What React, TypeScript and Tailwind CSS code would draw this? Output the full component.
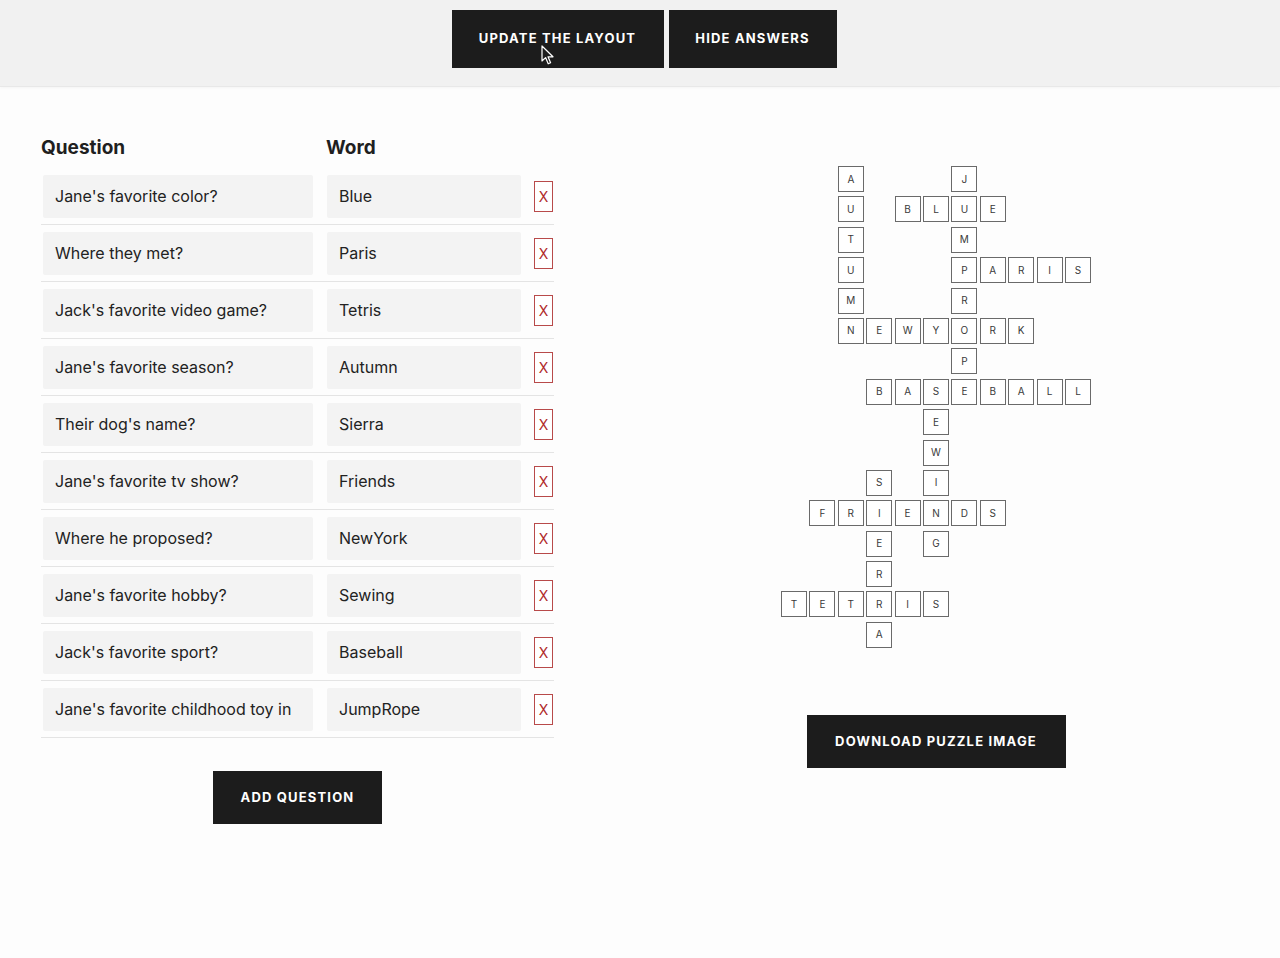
interface Entry {
  question: string
  word: string
}

interface Placement {
  word: string
  row: number
  col: number
  down: boolean
}

const entries: Entry[] = [
  { question: "Jane's favorite color?", word: 'Blue' },
  { question: 'Where they met?', word: 'Paris' },
  { question: "Jack's favorite video game?", word: 'Tetris' },
  { question: "Jane's favorite season?", word: 'Autumn' },
  { question: "Their dog's name?", word: 'Sierra' },
  { question: "Jane's favorite tv show?", word: 'Friends' },
  { question: 'Where he proposed?', word: 'NewYork' },
  { question: "Jane's favorite hobby?", word: 'Sewing' },
  { question: "Jack's favorite sport?", word: 'Baseball' },
  { question: "Jane's favorite childhood toy in", word: 'JumpRope' },
]

const placements: Placement[] = [
  { word: 'AUTUMN', row: 0, col: 2, down: true },
  { word: 'JUMPROPE', row: 0, col: 6, down: true },
  { word: 'BLUE', row: 1, col: 4, down: false },
  { word: 'PARIS', row: 3, col: 6, down: false },
  { word: 'NEWYORK', row: 5, col: 2, down: false },
  { word: 'BASEBALL', row: 7, col: 3, down: false },
  { word: 'SEWING', row: 7, col: 5, down: true },
  { word: 'SIERRA', row: 10, col: 3, down: true },
  { word: 'FRIENDS', row: 11, col: 1, down: false },
  { word: 'TETRIS', row: 14, col: 0, down: false },
]

const colStart = [
  'col-start-1', 'col-start-2', 'col-start-3', 'col-start-4', 'col-start-5', 'col-start-6',
  'col-start-7', 'col-start-8', 'col-start-9', 'col-start-10', 'col-start-11',
]

const rowStart = [
  'row-start-1', 'row-start-2', 'row-start-3', 'row-start-4', 'row-start-5', 'row-start-6',
  'row-start-7', 'row-start-8', 'row-start-9', 'row-start-10', 'row-start-11', 'row-start-12',
  'row-start-13', 'row-start-14', 'row-start-15', 'row-start-16',
]

// collapse the word list into unique cells
function buildCells() {
  const cells = new Map<string, { row: number; col: number; letter: string }>()
  placements.forEach((p) => {
    p.word.split('').forEach((letter, i) => {
      const row = p.down ? p.row + i : p.row
      const col = p.down ? p.col : p.col + i
      cells.set(`${row}-${col}`, { row, col, letter })
    })
  })
  return Array.from(cells.values())
}

const font = { fontFamily: '"Inter", "Open Sans", sans-serif' }

function DarkButton({ label, className }: { label: string; className: string }) {
  return (
    <button
      className={`bg-[#1c1c1c] text-white text-[13px] font-bold tracking-[0.09em] uppercase ${className}`}
    >
      {label}
    </button>
  )
}

function Cursor({ className }: { className: string }) {
  return (
    <svg viewBox="0 0 13 21" className={className}>
      <path
        d="M1 1 L1 16 L4.6 12.6 L7.2 18.8 L9.6 17.8 L7 11.8 L12 11.8 Z"
        fill="#1c1c1c"
        stroke="#ffffff"
        strokeWidth="1.2"
        strokeLinejoin="round"
      />
    </svg>
  )
}

export default function App() {
  const cells = buildCells()

  return (
    <div className="min-h-[958px] bg-[#fdfdfd] text-[#1f1f1f]" style={font}>
      {/* Toolbar */}
      <div className="h-[87px] bg-[#f1f1f1] border-b border-[#e8e8e8] shadow-[0_1px_3px_rgba(0,0,0,0.04)] flex justify-center items-start pt-[10px] pl-[8px] gap-[5px]">
        <div className="relative">
          <DarkButton label="Update the layout" className="w-[212px] h-[58px]" />
          <Cursor className="absolute left-[89px] top-[35px] w-[13px] h-[21px]" />
        </div>
        <DarkButton label="Hide answers" className="w-[168px] h-[58px]" />
      </div>

      <div className="flex items-start pl-[41px] pt-[48px]">
        {/* Question list */}
        <div className="w-[513px]">
          <div className="flex text-[19px] font-bold h-[26px] items-center">
            <span className="w-[285px]">Question</span>
            <span>Word</span>
          </div>
          <div className="mt-[7px]">
            {entries.map((e) => (
              <div
                key={e.word}
                className="flex items-center h-[57px] pl-[2px] border-b border-[#e4e4e4]"
              >
                <div className="w-[270px] h-[43px] bg-[#f3f3f3] rounded-[2px] flex items-center pl-[12px] text-[16px] text-[#222] whitespace-nowrap overflow-hidden">
                  {e.question}
                </div>
                <div className="w-[194px] h-[43px] bg-[#f3f3f3] rounded-[2px] flex items-center pl-[12px] ml-[14px] text-[16px] text-[#222]">
                  {e.word}
                </div>
                <button className="ml-[13px] w-[19px] h-[31px] border border-[#b84a4a] bg-white text-[#b02a2a] text-[14px] flex items-center justify-center">
                  X
                </button>
              </div>
            ))}
          </div>
          <div className="flex justify-center mt-[33px]">
            <DarkButton label="Add question" className="w-[169px] h-[53px]" />
          </div>
        </div>

        {/* Puzzle preview */}
        <div className="ml-[227px] mt-[31px] w-[310px] flex flex-col items-center">
          <div className="grid grid-cols-[repeat(11,26px)] grid-rows-[repeat(16,26px)] gap-x-[2.4px] gap-y-[4.4px]">
            {cells.map((c) => (
              <div
                key={`${c.row}-${c.col}`}
                className={`${rowStart[c.row]} ${colStart[c.col]} border border-[#6a6a6a] bg-white flex items-center justify-center text-[10px] text-[#3a3a3a]`}
              >
                {c.letter}
              </div>
            ))}
          </div>
          <DarkButton label="Download puzzle image" className="mt-[67px] w-[259px] h-[53px]" />
        </div>
      </div>
    </div>
  )
}
